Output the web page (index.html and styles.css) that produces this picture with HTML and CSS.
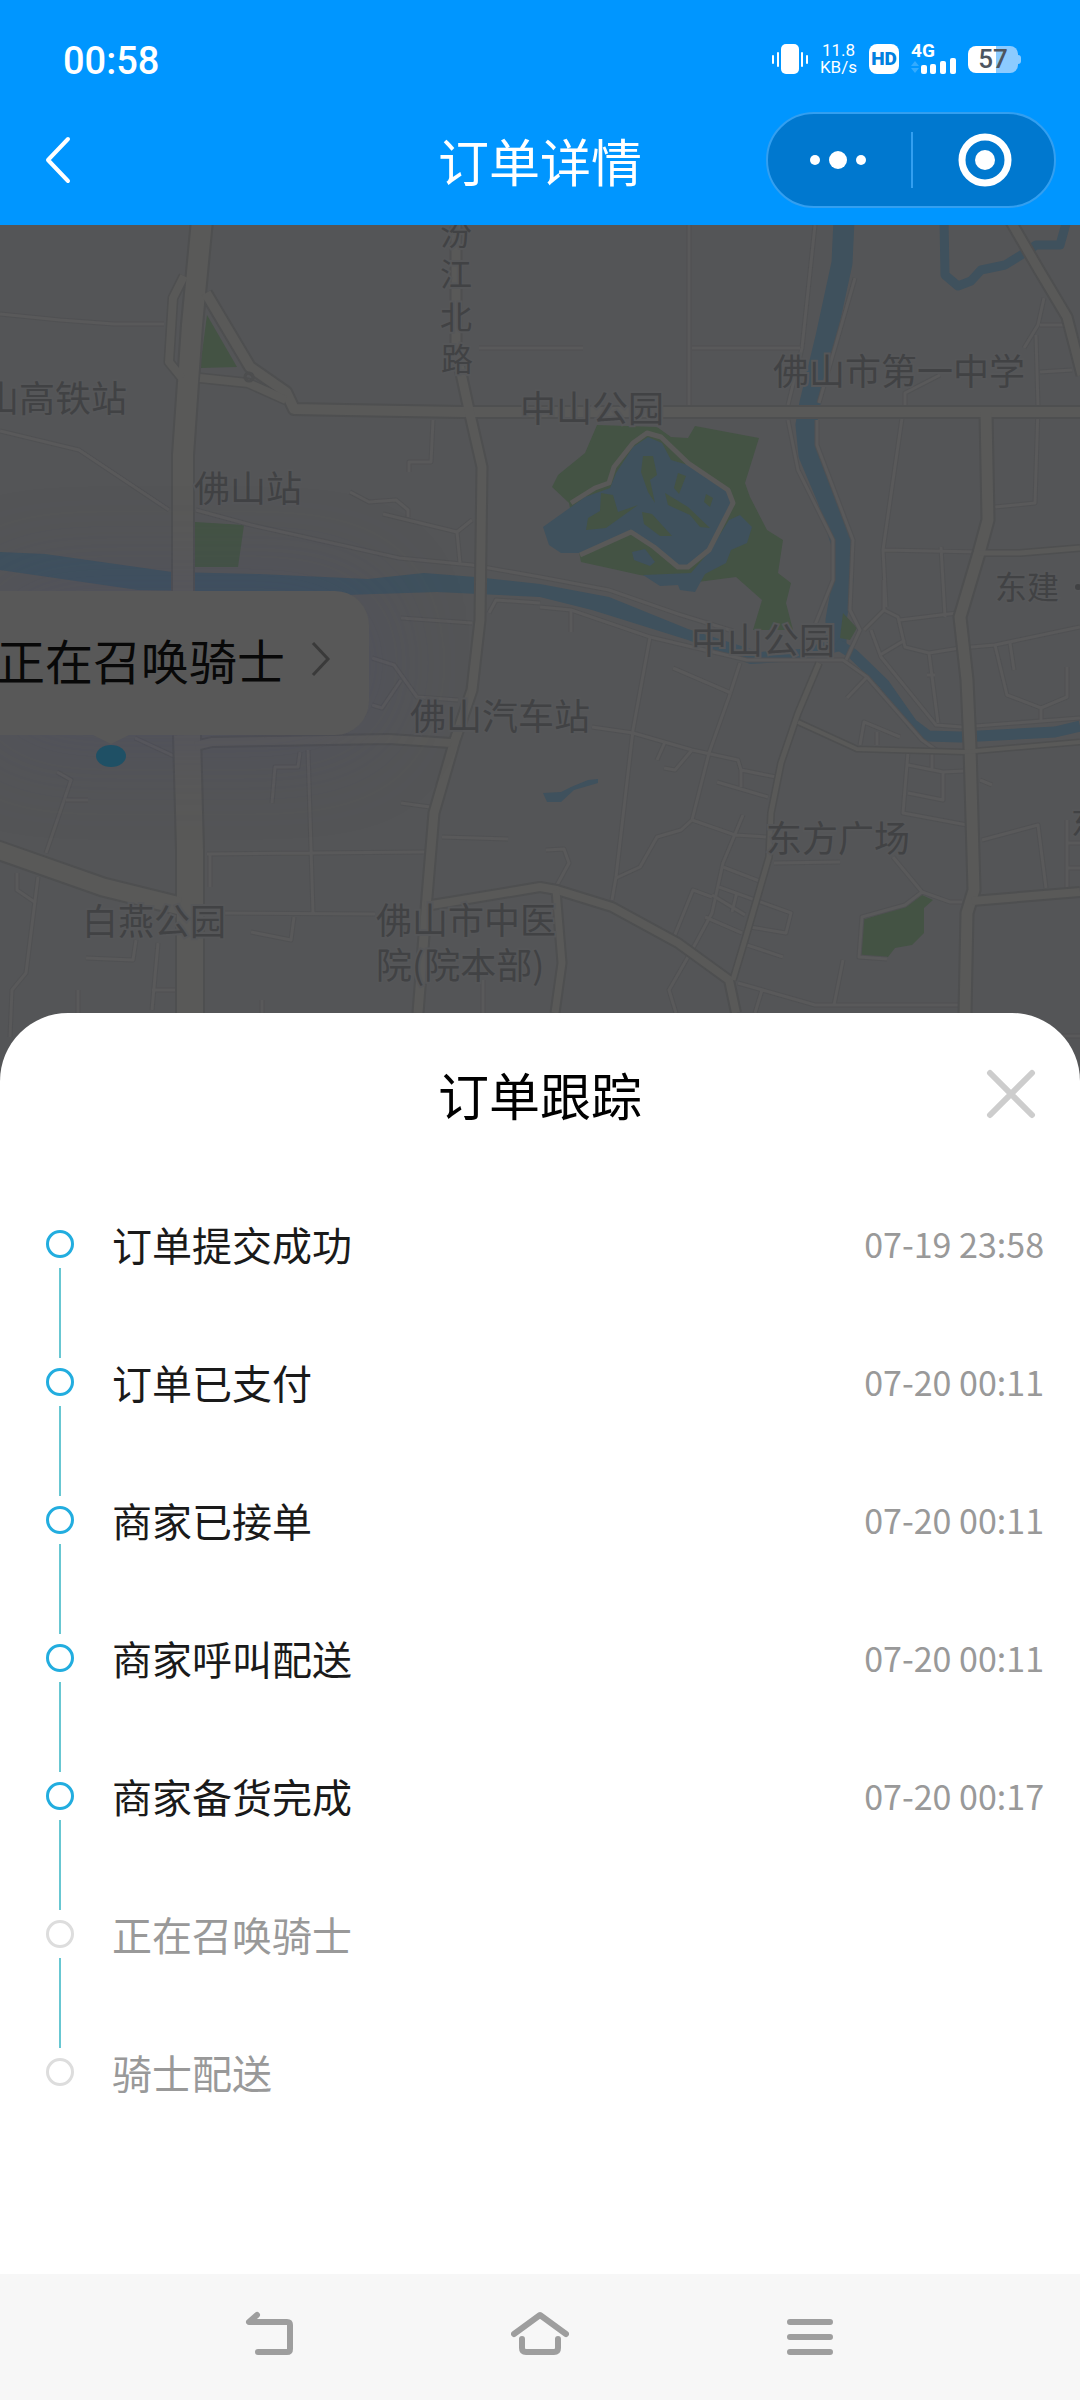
FILE: index.html
```html
<!DOCTYPE html>
<html lang="zh-CN">
<head>
  <meta charset="UTF-8">
  <title>订单详情</title>
  <meta name="viewport" content="width=device-width, initial-scale=1">
  <link rel="stylesheet" href="styles.css">
</head>
<body>

<header class="top">
  <div class="status-bar">
    <span class="clock">00:58</span>
    <div class="status-icons">
      <svg class="vibrate" width="36" height="30" viewBox="0 0 36 30" fill="#fff" aria-hidden="true">
        <rect x="9" y="0" width="18" height="30" rx="5"/>
        <rect x="0" y="11" width="2" height="9" rx="1"/>
        <rect x="5" y="8" width="2" height="15" rx="1"/>
        <rect x="29" y="8" width="2" height="15" rx="1"/>
        <rect x="34" y="11" width="2" height="9" rx="1"/>
      </svg>
      <div class="speed"><span>11.8</span><span>KB/s</span></div>
      <span class="hd">HD</span>
      <div class="signal">
        <span>4G</span>
        <svg width="45" height="17" viewBox="0 0 45 17" fill="#fff" aria-hidden="true">
          <path d="M0 9l4-5 4 5zM0 11h8l-4 5z" fill="#33abff"/>
          <rect x="10" y="8" width="6" height="9" rx="2"/>
          <rect x="19" y="7" width="6" height="10" rx="2"/>
          <rect x="29" y="4" width="6" height="13" rx="2"/>
          <rect x="39" y="1" width="6" height="16" rx="2"/>
        </svg>
      </div>
      <span class="battery">57</span>
    </div>
  </div>

  <div class="app-bar">
    <button type="button" class="back" aria-label="返回">
      <svg width="28" height="50" viewBox="0 0 28 50" fill="none" stroke="#fff" stroke-width="4" stroke-linecap="round" stroke-linejoin="round">
        <path d="M24 4L4 25l20 21"/>
      </svg>
    </button>
    <h1>订单详情</h1>
    <div class="capsule">
      <button type="button" aria-label="更多">
        <svg width="58" height="20" viewBox="0 0 58 20" fill="#fff">
          <circle cx="6" cy="10" r="5"/>
          <circle cx="29" cy="10" r="9"/>
          <circle cx="52" cy="10" r="5"/>
        </svg>
      </button>
      <button type="button" aria-label="关闭小程序">
        <svg width="54" height="54" viewBox="0 0 54 54">
          <circle cx="27" cy="27" r="23" fill="none" stroke="#fff" stroke-width="7"/>
          <circle cx="27" cy="27" r="10" fill="#fff"/>
        </svg>
      </button>
    </div>
  </div>
</header>

<section class="map">
  <svg class="map-canvas" viewBox="0 225 1080 860" preserveAspectRatio="xMidYMin slice">
    <!-- parks -->
    <g class="park">
      <path d="M207 315L237 367L200 368z"/>
      <path d="M195 522L244 525L238 567L195 567z"/>
      <path d="M597 425L657 427L671 437L688 438L695 426L759 438L745 483L750 497L767 530L783 540L778 573L791 583L786 603L793 630L753 630L762 600L736 577L690 583L640 575L581 562L569 503L552 487L558 475L585 453z"/>
      <path d="M862 920L908 905L922 895L933 900L924 908L924 933L912 945L895 948L888 957L860 957z"/>
    </g>

    <!-- rivers and lakes -->
    <g class="water">
      <path d="M0 552L45 554L172 572L258 574L368 579L424 573L475 577L540 584L609 597L688 629L760 652L800 649L832 640L845 650L800 661L750 664L688 640L592 610L540 597L437 592L344 595L200 591L138 590L0 570z"/>
      <path d="M648 437L662 443L671 460L688 465L729 493L733 503L712 547L690 566L678 567L654 547L631 533L580 553L561 553L549 545L543 527L585 497L610 488L616 473L633 447z"/>
      <path d="M729 520L740 515L752 527L747 543L731 550L726 563L705 574L695 592L680 590L678 585L660 586L643 575L691 573L709 552z"/>
      <path d="M632 552L645 549L655 562L650 566L634 560z"/>
      <path d="M543 793L561 792L571 787L588 780L598 779L598 783L574 790L561 802L547 802z"/>
    </g>
    <g class="stream">
      <path d="M844 220L842 263L826 337L810 403L806 425L809 455L828 500L842 545L843 580L836 620L836 645" stroke-width="21"/>
      <path d="M836 643L853 654L884 684L912 724L928 736L960 737L1055 732L1080 726" stroke-width="11"/>
      <path d="M944 220L945 275L958 286L971 281L981 270L1005 265L1026 252L1036 245L1060 245L1067 220" stroke-width="9"/>
    </g>
    <g class="park">
      <path d="M843 613L857 628L850 640L840 638z"/>
      <path d="M643 456L653 456L657 475L650 480L655 503L648 492L641 472z"/>
      <path d="M601 493L613 495L618 512L638 505L606 528L586 530L588 518L600 511z"/>
      <path d="M642 512L652 514L672 536L660 536L644 524z"/>
      <path d="M678 473L686 476L679 494L674 488z"/>
      <path d="M665 493L688 507L710 528L700 527L690 515L668 505z"/>
      <path d="M706 494L713 498L710 507L704 502z"/>
    </g>

    <!-- small streets: wider dark copy underneath as casing -->
    <defs>
      <g id="streets">
        <path d="M0 314L60 320L114 324H164"/>
        <path d="M0 431L79 450L169 510"/>
        <path d="M196 510L251 525L399 558L472 565L540 577L609 590L678 614L733 631"/>
        <path d="M479 348H583M689 225V405M692 348H800M815 225L802 348L788 405M855 278L819 403"/>
        <path d="M433 420L431 462H409V472M350 492L369 502L396 500L408 510V517M383 514L457 532L460 563M457 532L472 520"/>
        <path d="M1044 298L1038 325L1024 348M1036 335L1038 407L1035 503L995 507M1040 325H1065M1040 372L1072 370"/>
        <path d="M905 405V393L940 375M902 418L883 550L886 607M883 550L979 552M941 547L945 617"/>
        <path d="M788 420L798 470L833 540V580L815 625M817 420V445L853 540L850 610L860 630L846 660"/>
        <path d="M540 607L571 610L650 637L747 660H843L867 677L922 740L936 750"/>
        <path d="M571 610V632M871 630L881 657L936 725L962 727L1080 718"/>
        <path d="M650 637L633 730L616 877L612 900"/>
        <path d="M592 727L633 733L692 750L738 760L741 770L776 777M741 770V787M717 782L768 797"/>
        <path d="M740 663L729 697L709 753L692 820L681 830L657 837L640 867L616 878"/>
        <path d="M673 668L731 693M665 742L657 760M692 750L675 770L664 768"/>
        <path d="M692 820L735 835L767 837M743 815L723 863L712 913L692 950L669 990L676 1013"/>
        <path d="M723 867L762 882M719 887L791 913L786 933L750 927M712 895L745 915M737 892L732 912M705 917L742 933M712 897L693 890L674 937M747 945L783 957"/>
        <path d="M884 580V610L864 630M884 610L898 617L905 647L929 653L960 648L995 645L1080 627M929 653L938 723M900 620L957 613M905 640L880 655M927 675H935"/>
        <path d="M995 645L1007 695L1041 708L1067 697V667M1041 708V720M1010 643L1014 670"/>
        <path d="M867 677L847 698M860 745L864 722L900 737M877 745V732"/>
        <path d="M908 752L903 813L967 825M908 793L943 800V772L964 771M908 765L943 772M932 752V770"/>
        <path d="M982 840L1038 825L1046 888M1067 820V888M1067 843H1080M1067 868H1080M980 780L992 785"/>
        <path d="M893 857L922 892L950 902H962M922 892L905 905L862 917L859 957L887 959"/>
        <path d="M738 983L815 1005H958M843 960L834 1005M762 990L755 1013M774 863L840 862"/>
        <path d="M546 850L564 849L569 863L557 885"/>
        <path d="M401 618L472 623M489 613L496 600L540 603M372 658L394 665L417 697L458 700M401 680L382 708L372 705"/>
        <path d="M300 752L298 767H275L272 803M308 750L313 913M207 854L425 852M210 855V887M215 913L375 914"/>
        <path d="M57 772L71 780L46 853M66 800H88M17 873V890L36 903M38 877L26 973L12 990L10 1037"/>
        <path d="M86 958L133 960L136 940M251 932L291 940L294 917M158 943L152 1010M152 990H175"/>
        <path d="M442 837L508 839M401 803L430 807M78 990V1013M483 980V1013M262 1000V1013"/>
        <path d="M135 738L176 757M1062 1036H1080"/>
      </g>
    </defs>
    <use href="#streets" class="street-casing"/>
    <use href="#streets" class="street"/>

    <!-- main roads: darker casing first, fill on top -->
    <g class="casing">
      <path d="M202 220L192 325L183 455V590L187 740" stroke-width="24"/>
      <path d="M187 735L190 850V1080" stroke-width="30"/>
      <path d="M184 276L173 298L169 362L182 378" stroke-width="11"/>
      <path d="M206 293L250 367L286 392L294 409L345 410L460 412H1080" stroke-width="14"/>
      <path d="M200 378L248 383L286 400" stroke-width="11"/>
      <path d="M456 220V350L469 410L482 467L480 620L472 690L455 740L434 813L427 897L418 1013" stroke-width="13"/>
      <path d="M1010 220L1039 270L1067 317L1082 375" stroke-width="13"/>
      <path d="M986 412L988 520L979 553L960 617L967 680L970 747L974 890L967 913L965 1013" stroke-width="15"/>
      <path d="M979 553L1020 553L1080 548" stroke-width="8"/>
      <path d="M972 901L1080 892" stroke-width="12"/>
      <path d="M425 906L450 902L540 887L557 890L612 907L678 943L729 980L736 1013" stroke-width="12"/>
      <path d="M556 890L562 963L555 1013" stroke-width="11"/>
      <path d="M819 663L798 713L781 763L771 813L769 857L747 933L733 980" stroke-width="8"/>
      <path d="M798 722L857 749L964 752L1080 742" stroke-width="7"/>
      <path d="M195 746L212 742L389 739L451 743" stroke-width="12"/>
      <path d="M-5 849L103 887L180 906" stroke-width="21"/>
    </g>
    <g class="road">
      <path d="M202 220L192 325L183 455V590L187 740" stroke-width="20"/>
      <path d="M187 735L190 850V1080" stroke-width="26"/>
      <path d="M184 276L173 298L169 362L182 378" stroke-width="8"/>
      <path d="M206 293L250 367L286 392L294 409L345 410L460 412H1080" stroke-width="10"/>
      <path d="M200 378L248 383L286 400" stroke-width="8"/>
      <path d="M456 220V350L469 410L482 467L480 620L472 690L455 740L434 813L427 897L418 1013" stroke-width="9"/>
      <path d="M1010 220L1039 270L1067 317L1082 375" stroke-width="9"/>
      <path d="M986 412L988 520L979 553L960 617L967 680L970 747L974 890L967 913L965 1013" stroke-width="11"/>
      <path d="M979 553L1020 553L1080 548" stroke-width="5"/>
      <path d="M972 901L1080 892" stroke-width="8"/>
      <path d="M425 906L450 902L540 887L557 890L612 907L678 943L729 980L736 1013" stroke-width="8"/>
      <path d="M556 890L562 963L555 1013" stroke-width="7"/>
      <path d="M819 663L798 713L781 763L771 813L769 857L747 933L733 980" stroke-width="5"/>
      <path d="M798 722L857 749L964 752L1080 742" stroke-width="4"/>
      <path d="M195 746L212 742L389 739L451 743" stroke-width="8"/>
      <path d="M-5 849L103 887L180 906" stroke-width="17"/>
      <path d="M580 555L631 532L654 547L678 567H688L709 550L733 503L728 490L688 463L661 437L647 433L633 443L614 467L609 483L595 488L571 503" stroke-width="5"/>
    </g>
    <circle cx="249" cy="377" r="4" fill="none" stroke="#4d4e4f" stroke-width="3"/>

    <!-- place names -->
    <g class="place">
      <text x="-17" y="412">山高铁站</text>
      <text x="194" y="502">佛山站</text>
      <text x="773" y="385">佛山市第一中学</text>
      <text x="410" y="730">佛山汽车站</text>
      <text x="376" y="934">佛山市中医</text>
      <text x="376" y="979">院(院本部)</text>
      <text x="520" y="422">中山公园</text>
      <text x="691" y="654">中山公园</text>
      <text x="766" y="852">东方广场</text>
      <text x="82" y="935">白燕公园</text>
    </g>
    <g class="place place-small">
      <text x="440" y="245">汾</text>
      <text x="440" y="286">江</text>
      <text x="440" y="329">北</text>
      <text x="441" y="371">路</text>
      <text x="995" y="599">东建</text>
      <text x="1071" y="834">东</text>
      <circle cx="1078" cy="587" r="3"/>
    </g>
  </svg>

  <button type="button" class="bubble">
    正在召唤骑士
    <svg width="20" height="38" viewBox="0 0 20 38" fill="none" stroke="#3a3a3a" stroke-width="3" aria-hidden="true">
      <path d="M2 3l15 16L2 35"/>
    </svg>
  </button>
  <span class="pin"></span>
</section>

<main class="sheet">
  <div class="sheet-head">
    <h2>订单跟踪</h2>
    <button type="button" class="close" aria-label="关闭">
      <svg width="50" height="50" viewBox="0 0 50 50" stroke="#cdcdcd" stroke-width="6" stroke-linecap="round">
        <path d="M4 4l42 42M46 4L4 46"/>
      </svg>
    </button>
  </div>

  <ol class="timeline">
    <li class="done"><span class="marker"></span><span class="step">订单提交成功</span><time>07-19 23:58</time></li>
    <li class="done"><span class="marker"></span><span class="step">订单已支付</span><time>07-20 00:11</time></li>
    <li class="done"><span class="marker"></span><span class="step">商家已接单</span><time>07-20 00:11</time></li>
    <li class="done"><span class="marker"></span><span class="step">商家呼叫配送</span><time>07-20 00:11</time></li>
    <li class="done"><span class="marker"></span><span class="step">商家备货完成</span><time>07-20 00:17</time></li>
    <li><span class="marker"></span><span class="step">正在召唤骑士</span></li>
    <li><span class="marker"></span><span class="step">骑士配送</span></li>
  </ol>
</main>

<nav class="nav-bar">
  <button type="button" aria-label="返回上一级">
    <svg width="58" height="46" viewBox="0 0 58 46">
      <path d="M16 4L8 11h38q3 0 3 3v24q0 3-3 3H17"/>
    </svg>
  </button>
  <button type="button" aria-label="主屏幕">
    <svg width="58" height="46" viewBox="0 0 58 46">
      <path d="M3 23L29 4l26 19M11 28v9q0 4 4 4h28q4 0 4-4v-9"/>
    </svg>
  </button>
  <button type="button" aria-label="最近任务">
    <svg width="58" height="46" viewBox="0 0 58 46">
      <path d="M9 11h40M9 26h40M9 41h40"/>
    </svg>
  </button>
</nav>

</body>
</html>
```
FILE: styles.css
```css
*,
*::before,
*::after {
  box-sizing: border-box;
}

body {
  margin: 0;
  min-height: 100vh;
  display: flex;
  flex-direction: column;
  font-family: "Noto Sans CJK SC", sans-serif;
  background: #fff;
}

h1, h2 {
  margin: 0;
  font-size: 51px;
  font-weight: 400;
  line-height: 64px;
}

button {
  padding: 0;
  border: none;
  background: none;
  font-family: inherit;
  cursor: pointer;
}

svg {
  display: block;
}

/* header */
.top {
  background: #0096ff;
  color: #fff;
}

.status-bar {
  display: flex;
  justify-content: space-between;
  align-items: center;
  height: 96px;
  padding: 22px 62px 0 63px;
  font-family: Roboto, sans-serif;
}

.clock {
  padding-top: 3px;
  font-size: 38px;
  font-weight: 500;
}

.status-icons {
  display: flex;
  align-items: center;
  gap: 12px;
}

.speed {
  display: flex;
  flex-direction: column;
  align-items: center;
  font-size: 17px;
  line-height: 17px;
}

.hd {
  width: 30px;
  border-radius: 8px;
  background: #fff;
  color: #0080e0;
  font-size: 19px;
  font-weight: 900;
  line-height: 30px;
  text-align: center;
}

.signal {
  display: flex;
  flex-direction: column;
  height: 30px;
  justify-content: space-between;
  font-size: 19px;
  font-weight: 700;
  line-height: 13px;
}

.battery {
  position: relative;
  width: 50px;
  border-radius: 8px;
  background: linear-gradient(to right, #fff 57%, #8ccbff 57%);
  color: #4d5560;
  font-size: 26px;
  font-weight: 500;
  line-height: 27px;
  text-align: center;
}

.battery::after {
  content: "";
  position: absolute;
  left: 50px;
  top: 9px;
  width: 3px;
  height: 9px;
  border-radius: 0 3px 3px 0;
  background: #8ccbff;
}

.app-bar {
  display: grid;
  grid-template-columns: 1fr auto 1fr;
  align-items: center;
  height: 129px;
  padding: 0 24px 2px 44px;
}

.app-bar h1 {
  padding-right: 20px;
}

.back {
  justify-self: start;
}

.capsule {
  justify-self: end;
  display: flex;
  width: 290px;
  height: 96px;
  border: 2px solid #339ff0;
  border-radius: 48px;
  background: #0078cf;
}

.capsule button {
  flex: 1;
  display: flex;
  align-items: center;
  justify-content: center;
  padding-right: 4px;
}

.capsule button + button {
  position: relative;
  padding: 0 0 0 4px;
}

.capsule button + button::before {
  content: "";
  position: absolute;
  left: 0;
  top: 18px;
  bottom: 18px;
  width: 2px;
  background: #339ff0;
}

/* map, already dimmed behind the sheet */
.map {
  position: relative;
  height: 860px;
  overflow: hidden;
  background: #545557;
}

.map-canvas {
  width: 100%;
  height: 100%;
}

.park {
  fill: #445344;
}

.water {
  fill: #3f515d;
}

.stream,
.street,
.street-casing,
.casing,
.road {
  fill: none;
  stroke-linejoin: round;
}

.stream {
  stroke: #3f515d;
}

.street-casing {
  stroke: #505153;
  stroke-width: 5px;
}

.street {
  stroke: #59595a;
  stroke-width: 3px;
}

.casing {
  stroke: #4e4f50;
}

.road {
  stroke: #595958;
}

.place {
  fill: #414244;
  stroke: #555658;
  stroke-width: 4px;
  paint-order: stroke;
  font-size: 36px;
}

.place-small {
  font-size: 32px;
}

.bubble {
  position: absolute;
  left: -3px;
  top: 366px;
  display: flex;
  align-items: center;
  gap: 26px;
  height: 144px;
  padding: 0 38px 8px 0;
  border-radius: 0 34px 34px 0;
  background: #585858;
  box-shadow: 0 0 100px rgba(70, 70, 110, 0.3);
  color: #080808;
  font-size: 48px;
}

.bubble::after {
  content: "";
  position: absolute;
  left: 94px;
  top: 143px;
  border: solid transparent;
  border-width: 10px 20px 0;
  border-top-color: #585858;
}

.pin {
  position: absolute;
  left: 96px;
  top: 520px;
  width: 30px;
  height: 22px;
  border-radius: 50%;
  background: #1f5065;
}

/* bottom sheet */
.sheet {
  position: relative;
  flex: 1;
  margin-top: -72px;
  border-radius: 68px 68px 0 0;
  background: #fff;
}

.sheet-head {
  display: grid;
  grid-template-columns: 1fr auto 1fr;
  align-items: center;
  height: 162px;
  padding: 0 44px;
}

.sheet-head h2 {
  grid-column: 2;
  color: #000;
}

.close {
  justify-self: end;
}

.timeline {
  margin: 0;
  padding: 55px 36px 48px 46px;
  list-style: none;
}

.timeline li {
  display: flex;
  gap: 38px;
  min-height: 138px;
  color: #999;
  line-height: 28px;
}

.marker {
  display: flex;
  flex-direction: column;
  align-items: center;
  width: 28px;
}

.marker::before {
  content: "";
  width: 28px;
  height: 28px;
  border: 3px solid #ddd;
  border-radius: 50%;
}

.marker::after {
  content: "";
  flex: 1;
  width: 2px;
  margin: 10px 0;
  background: #68c7d2;
}

.timeline li:last-child .marker::after {
  display: none;
}

.done .marker::before {
  border-color: #22addf;
}

.step {
  flex: 1;
  font-size: 40px;
}

.done .step {
  color: #1a1a1a;
}

.timeline time {
  font-size: 34px;
}

/* system navigation */
.nav-bar {
  display: grid;
  grid-template-columns: repeat(3, 1fr);
  height: 126px;
  padding: 0 12.5% 6px;
  background: #f7f7f7;
}

.nav-bar button {
  display: flex;
  align-items: center;
  justify-content: center;
}

.nav-bar svg {
  fill: none;
  stroke: #9e9e9e;
  stroke-width: 6px;
  stroke-linecap: round;
  stroke-linejoin: round;
}
```
